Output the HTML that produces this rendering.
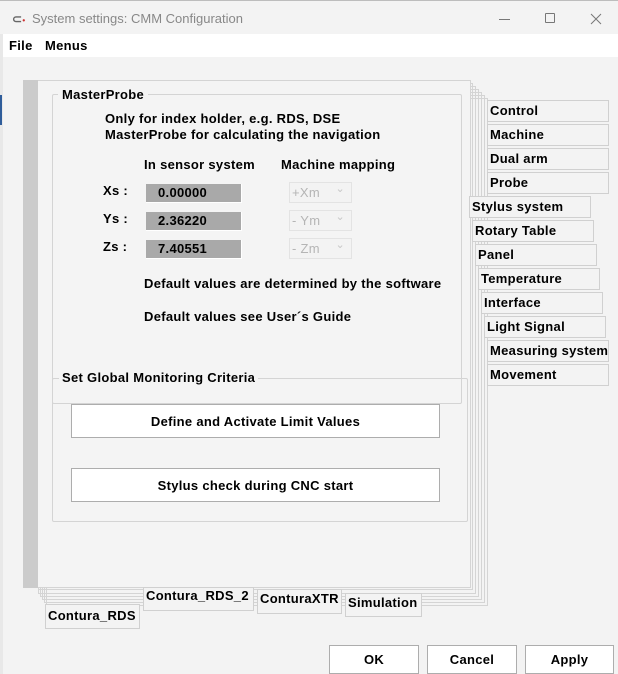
<!DOCTYPE html>
<html><head><meta charset="utf-8"><style>
*{margin:0;padding:0;box-sizing:border-box}
body{width:618px;height:674px;background:#f3f3f3;font-family:"Liberation Sans",Tahoma,sans-serif;font-size:13px;font-weight:bold;color:#000;position:relative;overflow:hidden;letter-spacing:0.3px}
.a{position:absolute}
.bx{position:absolute;border:1px solid #d4d4d4}
.t{position:absolute;white-space:nowrap}
.tab{position:absolute;border:1px solid #d0d0d0;background:#f3f3f3;padding-left:2px;line-height:19px;white-space:nowrap}
.btn{position:absolute;background:#fff;border:1px solid #adadad;text-align:center}
.fld{position:absolute;background:#a9a9a9;border-bottom:1px solid #fff;border-right:1px solid #fff;width:96px;height:19px;line-height:18px;padding-left:12px}
.cb{position:absolute;width:63px;height:21px;border:1px solid #e3e3e3;background:#f3f3f3;color:#b5b5b5;font-weight:normal;line-height:19px;padding-left:2px;font-size:13px}
.cb:after{content:"⌄";position:absolute;right:6px;top:-3px;font-size:11px;color:#c8c8c8}
</style></head><body>
<div class="a" style="left:0;top:0;width:618px;height:34px;background:#f3f3f3;border-top:1px solid #bdbdbd"></div>
<div class="a" style="left:0;top:34px;width:3px;height:640px;background:#e8e8e8"></div>
<div class="a" style="left:0;top:95px;width:2px;height:30px;background:#2f5d9a"></div>
<div class="t" style="left:12px;top:12px;font-weight:bold;color:#666;font-size:12px">⊂<span style="color:#c33;font-size:8px">•</span></div>
<div class="t" style="left:32px;top:11px;font-weight:normal;color:#888;font-size:13px;letter-spacing:0">System settings: CMM Configuration</div>
<div class="a" style="left:499px;top:19px;width:11px;height:1px;background:#777"></div>
<div class="a" style="left:545px;top:13px;width:10px;height:10px;border:1px solid #777;border-radius:1px"></div>
<svg class="a" style="left:590px;top:13px" width="12" height="12"><path d="M1 1L11 11M11 1L1 11" stroke="#777" stroke-width="1"/></svg>
<div class="a" style="left:3px;top:34px;width:615px;height:23px;background:#fff"></div>
<div class="t" style="left:9px;top:38px">File</div>
<div class="t" style="left:45px;top:38px">Menus</div>

<div class="bx" style="left:46px;top:98px;width:442px;height:508px"></div>
<div class="bx" style="left:44px;top:95px;width:441px;height:508px"></div>
<div class="bx" style="left:42px;top:92px;width:440px;height:508px"></div>
<div class="bx" style="left:40px;top:89px;width:439px;height:508px"></div>
<div class="bx" style="left:38px;top:86px;width:438px;height:508px"></div>
<div class="bx" style="left:38px;top:83px;width:435px;height:507px"></div>
<div class="bx" style="left:23px;top:80px;width:448px;height:508px;background:#f4f4f4"></div>
<div class="a" style="left:23px;top:80px;width:15px;height:508px;background:#cbcbcb"></div>

<div class="bx" style="left:52px;top:94px;width:410px;height:310px;border-radius:2px"></div>
<div class="t" style="left:58px;top:87px;background:#f4f4f4;padding:0 4px">MasterProbe</div>
<div class="t" style="left:105px;top:111px">Only for index holder, e.g. RDS, DSE</div>
<div class="t" style="left:105px;top:127px">MasterProbe for calculating the navigation</div>
<div class="t" style="left:144px;top:157px">In sensor system</div>
<div class="t" style="left:281px;top:157px">Machine mapping</div>
<div class="t" style="left:103px;top:183px">Xs :</div>
<div class="t" style="left:103px;top:211px">Ys :</div>
<div class="t" style="left:103px;top:239px">Zs :</div>
<div class="fld" style="left:146px;top:184px">0.00000</div>
<div class="fld" style="left:146px;top:212px">2.36220</div>
<div class="fld" style="left:146px;top:240px">7.40551</div>
<div class="cb" style="left:289px;top:182px">+Xm</div>
<div class="cb" style="left:289px;top:210px">- Ym</div>
<div class="cb" style="left:289px;top:238px">- Zm</div>
<div class="t" style="left:144px;top:276px">Default values are determined by the software</div>
<div class="t" style="left:144px;top:309px">Default values see User´s Guide</div>

<div class="bx" style="left:52px;top:378px;width:416px;height:144px;border-radius:2px"></div>
<div class="t" style="left:59px;top:370px;background:#f4f4f4;padding:0 3px">Set Global Monitoring Criteria</div>
<div class="btn" style="left:71px;top:404px;width:369px;height:34px;line-height:33px">Define and Activate Limit Values</div>
<div class="btn" style="left:71px;top:468px;width:369px;height:34px;line-height:33px">Stylus check during CNC start</div>

<div class="tab" style="left:487px;top:100px;width:122px;height:22px">Control</div>
<div class="tab" style="left:487px;top:124px;width:122px;height:22px">Machine</div>
<div class="tab" style="left:487px;top:148px;width:122px;height:22px">Dual arm</div>
<div class="tab" style="left:487px;top:172px;width:122px;height:22px">Probe</div>
<div class="tab" style="left:469px;top:196px;width:122px;height:22px">Stylus system</div>
<div class="tab" style="left:472px;top:220px;width:122px;height:22px">Rotary Table</div>
<div class="tab" style="left:475px;top:244px;width:122px;height:22px">Panel</div>
<div class="tab" style="left:478px;top:268px;width:122px;height:22px">Temperature</div>
<div class="tab" style="left:481px;top:292px;width:122px;height:22px">Interface</div>
<div class="tab" style="left:484px;top:316px;width:122px;height:22px">Light Signal</div>
<div class="tab" style="left:487px;top:340px;width:122px;height:22px;overflow:hidden">Measuring system</div>
<div class="tab" style="left:487px;top:364px;width:122px;height:22px">Movement</div>

<div class="tab" style="left:45px;top:604px;width:95px;height:25px;line-height:22px">Contura_RDS</div>
<div class="tab" style="left:143px;top:587px;width:111px;height:24px;line-height:15px">Contura_RDS_2</div>
<div class="tab" style="left:257px;top:589px;width:85px;height:25px;line-height:17px">ConturaXTR</div>
<div class="tab" style="left:345px;top:593px;width:77px;height:24px;line-height:17px">Simulation</div>

<div class="btn" style="left:329px;top:645px;width:90px;height:29px;line-height:27px">OK</div>
<div class="btn" style="left:427px;top:645px;width:90px;height:29px;line-height:27px">Cancel</div>
<div class="btn" style="left:525px;top:645px;width:89px;height:29px;line-height:27px">Apply</div>
</body></html>
